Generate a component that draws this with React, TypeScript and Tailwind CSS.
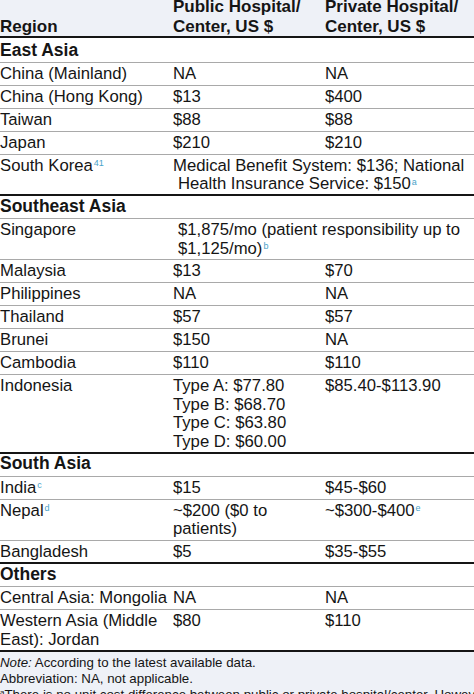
import React from 'react';

type Cell = React.ReactNode;

interface RowData {
  region: Cell;
  pub?: Cell;
  priv?: Cell;
  span?: Cell;
  tight?: boolean;
}

interface Section {
  title: string;
  rows: RowData[];
}

const Sup = ({ children }: { children: React.ReactNode }) => (
  <sup className="ml-[1px] text-[9px] text-[#4aa3c9]">{children}</sup>
);

const sections: Section[] = [
  {
    title: 'East Asia',
    rows: [
      { region: 'China (Mainland)', pub: 'NA', priv: 'NA' },
      { region: 'China (Hong Kong)', pub: '$13', priv: '$400' },
      { region: 'Taiwan', pub: '$88', priv: '$88' },
      { region: 'Japan', pub: '$210', priv: '$210' },
      {
        region: (
          <>
            South Korea<Sup>41</Sup>
          </>
        ),
        span: (
          <>
            <div className="whitespace-nowrap">Medical Benefit System: $136; National</div>
            <div className="whitespace-nowrap pl-[5px]">
              Health Insurance Service: $150<Sup>a</Sup>
            </div>
          </>
        )
      }
    ]
  },
  {
    title: 'Southeast Asia',
    rows: [
      {
        region: 'Singapore',
        tight: true,
        span: (
          <div className="pl-[5px]">
            <div className="whitespace-nowrap">$1,875/mo (patient responsibility up to</div>
            <div className="whitespace-nowrap">
              $1,125/mo)<Sup>b</Sup>
            </div>
          </div>
        )
      },
      { region: 'Malaysia', pub: '$13', priv: '$70' },
      { region: 'Philippines', pub: 'NA', priv: 'NA' },
      { region: 'Thailand', pub: '$57', priv: '$57' },
      { region: 'Brunei', pub: '$150', priv: 'NA' },
      { region: 'Cambodia', pub: '$110', priv: '$110' },
      {
        region: 'Indonesia',
        pub: (
          <>
            <div>Type A: $77.80</div>
            <div>Type B: $68.70</div>
            <div>Type C: $63.80</div>
            <div>Type D: $60.00</div>
          </>
        ),
        priv: '$85.40-$113.90'
      }
    ]
  },
  {
    title: 'South Asia',
    rows: [
      {
        region: (
          <>
            India<Sup>c</Sup>
          </>
        ),
        pub: '$15',
        priv: '$45-$60'
      },
      {
        region: (
          <>
            Nepal<Sup>d</Sup>
          </>
        ),
        pub: '~$200 ($0 to patients)',
        priv: (
          <>
            ~$300-$400<Sup>e</Sup>
          </>
        )
      },
      { region: 'Bangladesh', pub: '$5', priv: '$35-$55' }
    ]
  },
  {
    title: 'Others',
    rows: [
      { region: 'Central Asia: Mongolia', pub: 'NA', priv: 'NA' },
      { region: 'Western Asia (Middle East): Jordan', pub: '$80', priv: '$110' }
    ]
  }
];

function Row({ row, last }: { row: RowData; last: boolean }) {
  const pad = row.tight
    ? 'pt-[2px] pb-[1px] leading-[18.5px]'
    : last
      ? 'pt-[2px] pb-[0.5px] leading-[18.5px]'
      : 'pt-[2px] pb-[1.5px] leading-[18.5px]';
  return (
    <div
      className={
        last
          ? 'flex border-b-2 border-[#151515]'
          : 'flex border-b border-[#a9a9a9]'
      }
    >
      <div className={`w-[173px] shrink-0 pr-[4px] ${pad}`}>{row.region}</div>
      {row.span ? (
        <div className={`flex-1 ${pad}`}>{row.span}</div>
      ) : (
        <>
          <div className={`w-[152px] shrink-0 pr-[4px] ${pad}`}>{row.pub}</div>
          <div className={`flex-1 ${pad}`}>{row.priv}</div>
        </>
      )}
    </div>
  );
}

export default function App() {
  return (
    <div
      className="h-[694px] w-[474px] overflow-hidden bg-white text-[16.7px] text-[#151515]"
      style={{ fontFamily: '"Liberation Sans", Arial, sans-serif' }}
    >
      <div className="-mt-[4px]">
        <div className="flex h-[42px] items-end border-b-2 border-[#151515] bg-[#eef1f7] text-[17px] font-bold leading-[19.5px]">
          <div className="w-[173px] shrink-0">Region</div>
          <div className="w-[152px] shrink-0">
            Public Hospital/
            <br />
            Center, US $
          </div>
          <div className="flex-1">
            Private Hospital/
            <br />
            Center, US $
          </div>
        </div>

        {sections.map((s, si) => (
          <div key={s.title}>
            <div
              className={
                si === 0
                  ? 'border-b border-[#a9a9a9] pt-[2.5px] pb-[2.5px] text-[17.5px] leading-[18.5px] font-bold'
                  : 'border-b border-[#a9a9a9] pt-[0.5px] pb-[3px] text-[17.5px] leading-[18.5px] font-bold'
              }
            >
              {s.title}
            </div>
            {s.rows.map((r, i) => (
              <Row key={i} row={r} last={i === s.rows.length - 1} />
            ))}
          </div>
        ))}

        <div className="bg-[#eef1f7] pt-[3px] text-[13.3px] leading-[16px]">
          <div>
            <span className="italic">Note:</span> According to the latest available data.
          </div>
          <div>Abbreviation: NA, not applicable.</div>
          <div className="whitespace-nowrap">
            <sup className="text-[8px]">a</sup>There is no unit cost difference between public or private
            hospital/center. However, the patient copayment differs.
          </div>
        </div>
      </div>
    </div>
  );
}
